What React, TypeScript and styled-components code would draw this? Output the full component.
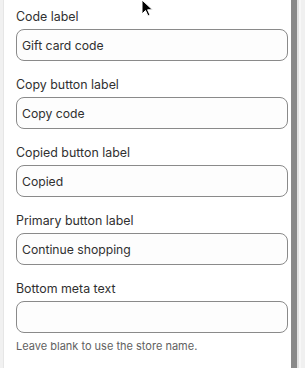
import React from "react";
import styled, { createGlobalStyle } from "styled-components";

const Global = createGlobalStyle`
  html, body { margin: 0; padding: 0; background: #f1f1f1; }
  body { font-family: Inter, "Noto Sans", sans-serif; -webkit-font-smoothing: antialiased; }
  * { box-sizing: border-box; }
`;

const Frame = styled.div`
  position: relative;
  display: flex;
  width: 305px;
  height: 368px;
  overflow: hidden;
  background: #f1f1f1;
`;

const Gutter = styled.div`
  width: 3px;
  flex: none;
  background: #f1f1f1;
`;

const Panel = styled.div`
  flex: 1;
  background: #ffffff;
  border-left: 1px solid #e6e6e6;
  padding: 7px 3px 0 12px;
  display: flex;
  flex-direction: column;
  gap: 14px;
`;

const ScrollThumb = styled.div`
  width: 6px;
  flex: none;
  background: #898989;
`;

const Edge = styled.div`
  width: 8px;
  flex: none;
  display: flex;
  background: #f1f1f1;
`;

const EdgeLine = styled.div<{ $c: string; $w: number }>`
  width: ${(p) => p.$w}px;
  flex: none;
  background: ${(p) => p.$c};
`;

const Field = styled.div`
  display: flex;
  flex-direction: column;
`;

const Label = styled.label`
  font-size: 12.4px;
  line-height: 20px;
  color: #303030;
  margin-bottom: 2px;
`;

const Input = styled.div`
  height: 32px;
  border: 1px solid #8a8a8a;
  border-radius: 8px;
  background: #fdfdfd;
  padding: 0 11px 0 5px;
  display: flex;
  align-items: center;
  font-size: 12.2px;
  color: #303030;
`;

const Help = styled.div`
  font-size: 11px;
  line-height: 20px;
  color: #616161;
  margin-top: 3px;
`;

const Cursor = styled.svg`
  position: absolute;
  left: 141px;
  top: -1px;
`;

const fields = [
  { label: "Code label", value: "Gift card code" },
  { label: "Copy button label", value: "Copy code" },
  { label: "Copied button label", value: "Copied" },
  { label: "Primary button label", value: "Continue shopping" },
  { label: "Bottom meta text", value: "", help: "Leave blank to use the store name." },
];

export default function App() {
  return (
    <Frame>
      <Global />
      <Gutter />
      <Panel>
        {fields.map((f) => (
          <Field key={f.label}>
            <Label>{f.label}</Label>
            <Input>{f.value}</Input>
            {f.help && <Help>{f.help}</Help>}
          </Field>
        ))}
      </Panel>
      <ScrollThumb />
      <Edge>
        <EdgeLine $c="#e2e2e2" $w={2} />
        <EdgeLine $c="#f7f7f7" $w={2} />
        <EdgeLine $c="#f0f0f0" $w={4} />
      </Edge>
      <Cursor width="13" height="19" viewBox="0 0 13 19">
        <path d="M1 1 L1 15 L4.5 11.5 L7 17 L9 16 L6.6 10.8 L11.5 10.8 Z" fill="#000" stroke="#fff" strokeWidth="1" />
      </Cursor>
    </Frame>
  );
}
